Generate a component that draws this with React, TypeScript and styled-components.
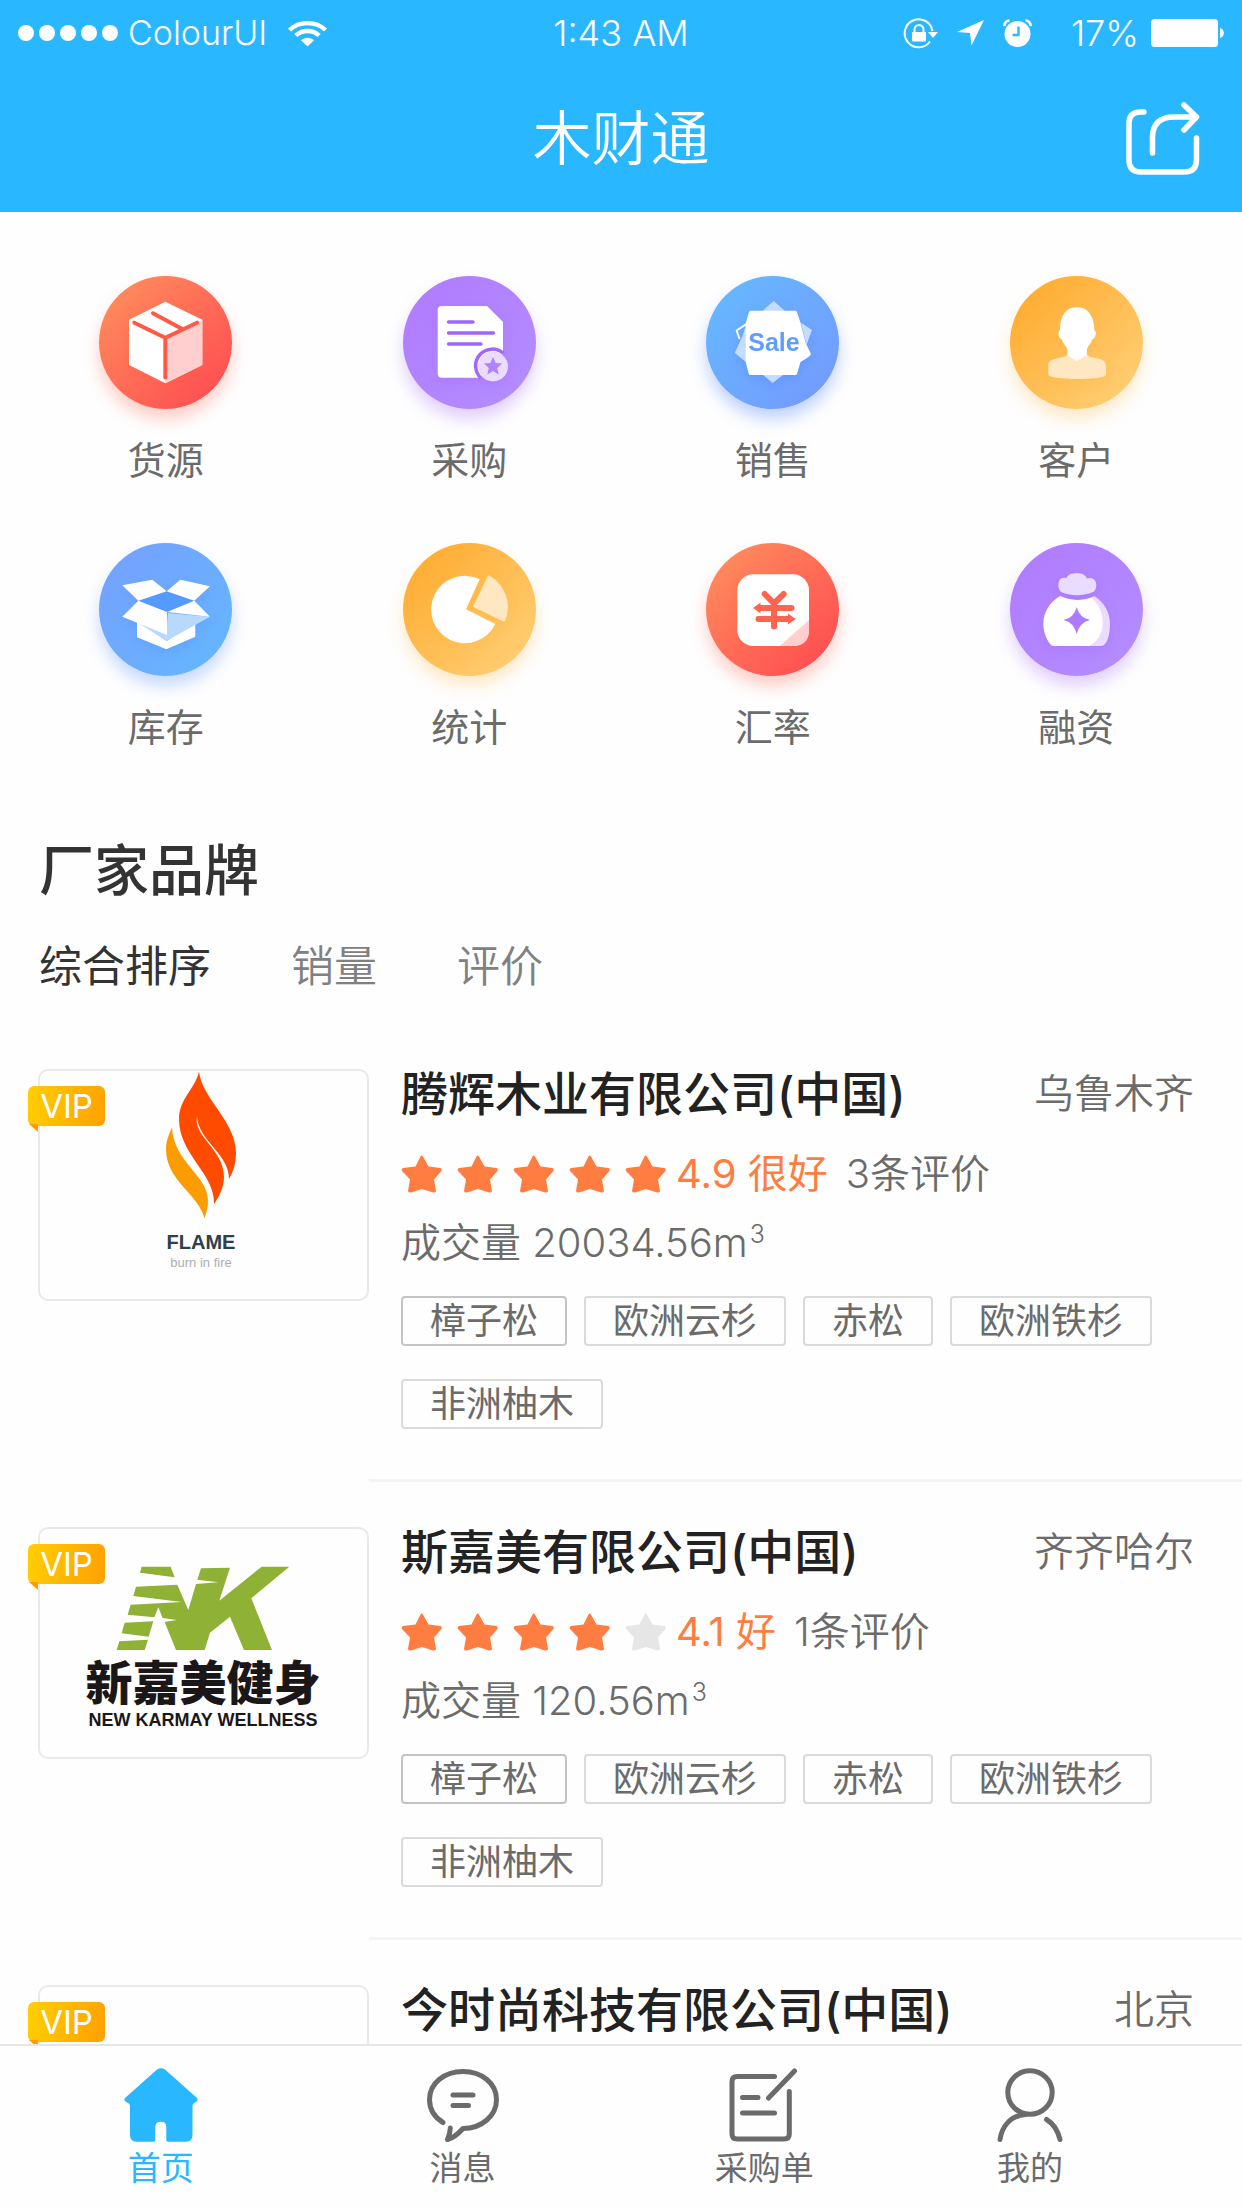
import React from "react";
import styled, { createGlobalStyle } from "styled-components";

const brand = "#29b8ff";
const grey = "#6b6b6b";
const orange = "#ff7d40";

const GlobalStyle = createGlobalStyle`
  *, *::before, *::after { box-sizing: border-box; }
  body {
    margin: 0;
    background: #fefefe;
    color: ${grey};
    font-family: Inter, "Noto Sans CJK SC", sans-serif;
    font-weight: 400;
  }
  button { border: 0; padding: 0; background: none; color: inherit; font: inherit; cursor: pointer; }
  a { color: inherit; text-decoration: none; }
  h1, h2, h3, p, ul { margin: 0; padding: 0; font-weight: inherit; }
  ul { list-style: none; }
  svg { display: block; flex: none; }
`;

const Screen = styled.div`
  display: flex;
  flex-direction: column;
  height: 100vh;
`;

/* ---------- header ---------- */

const Header = styled.header`
  flex: none;
  background: ${brand};
  color: #fff;
`;

const StatusBar = styled.div`
  display: grid;
  grid-template-columns: 1fr auto 1fr;
  align-items: center;
  height: 66px;
  padding: 0 18px;
  font-size: 36px;
  font-weight: 300;
  line-height: 40px;
`;

const StatusGroup = styled.div<{ $end?: boolean }>`
  display: flex;
  align-items: center;
  gap: ${(p) => (p.$end ? "19px" : "10px")};
  justify-content: ${(p) => (p.$end ? "flex-end" : "flex-start")};
`;

const Carrier = styled.span`
  margin-right: 11px;
  font-size: 34px;
`;

const Signal = styled.div`
  display: flex;
  gap: 5px;
`;

const SignalDot = styled.i`
  width: 16px;
  height: 16px;
  border-radius: 50%;
  background: #fff;
`;

const Power = styled.div`
  display: flex;
  align-items: center;
  gap: 12px;
  margin-left: 20px;
`;

const TitleBar = styled.div`
  display: grid;
  grid-template-columns: 1fr auto 1fr;
  align-items: center;
  height: 146px;
  padding: 0 42px;
`;

const Title = styled.h1`
  grid-column: 2;
  font-size: 59px;
  font-weight: 350;
  line-height: 72px;
`;

const ShareButton = styled.button`
  justify-self: end;
`;

/* ---------- shortcuts ---------- */

const Content = styled.main`
  flex: 1;
  min-height: 0;
  overflow-y: auto;
  scrollbar-width: none;
`;

const Shortcuts = styled.nav`
  display: grid;
  grid-template-columns: repeat(4, 1fr);
  row-gap: 59px;
  padding: 64px 14px 0;
`;

const Shortcut = styled.a`
  display: flex;
  flex-direction: column;
  align-items: center;
  gap: 27px;
  font-size: 38px;
  line-height: 48px;
`;

const Disc = styled.span<{ $from: string; $to: string; $glow: string }>`
  width: 133px;
  height: 133px;
  border-radius: 50%;
  background: linear-gradient(135deg, ${(p) => p.$from} 15%, ${(p) => p.$to} 85%);
  box-shadow: 0 10px 16px ${(p) => p.$glow};

  svg { filter: drop-shadow(0 4px 5px ${(p) => p.$glow}); }
`;

/* ---------- brand list ---------- */

const SectionTitle = styled.h2`
  padding: 87px 39px 0;
  color: #333;
  font-size: 55px;
  font-weight: 500;
  line-height: 64px;
`;

const SortBar = styled.div`
  display: flex;
  gap: 80px;
  padding: 36px 39px 30px;
`;

const SortButton = styled.button<{ $active?: boolean }>`
  color: ${(p) => (p.$active ? "#333" : "#808080")};
  font-size: 43px;
  font-weight: ${(p) => (p.$active ? 400 : 350)};
  line-height: 56px;
`;

const Company = styled.article`
  display: flex;
  align-items: stretch;
  padding-left: 38px;
`;

const LogoFrame = styled.div`
  position: relative;
  flex: none;
  width: 331px;
  height: 232px;
  margin-top: 45px;
  border: 2px solid #e9e9e9;
  border-radius: 10px;

  > svg { margin: -2px; }
`;

const VipBadge = styled.span`
  position: absolute;
  top: 15px;
  left: -12px;
  width: 77px;
  height: 40px;
  border-radius: 6px;
  background: linear-gradient(100deg, #ffcf00, #ffa000);
  color: #fff;
  font-size: 33px;
  font-weight: 400;
  line-height: 40px;
  text-align: center;

  &::after {
    content: "";
    position: absolute;
    top: 38px;
    left: 1px;
    border-top: 8px solid #ff9a00;
    border-left: 9px solid transparent;
  }
`;

const Details = styled.div<{ $ruled: boolean }>`
  flex: 1;
  min-width: 0;
  padding: 42px 48px 50px 32px;
  border-bottom: ${(p) => (p.$ruled ? "3px solid #f4f4f4" : "0")};
`;

const NameRow = styled.div`
  display: flex;
  align-items: center;
  justify-content: space-between;
`;

const CompanyName = styled.h3`
  color: #222;
  font-size: 47px;
  font-weight: 500;
  line-height: 56px;
`;

const City = styled.span`
  font-size: 40px;
  font-weight: 350;
  line-height: 56px;
`;

const RatingRow = styled.div`
  display: flex;
  align-items: center;
  margin-top: 27px;
  font-size: 40px;
  font-weight: 350;
  line-height: 50px;
`;

const Stars = styled.span`
  display: flex;
  gap: 15px;
  margin-right: 10px;
`;

const Score = styled.span`
  margin-right: 18px;
  color: ${orange};
  font-weight: 400;
`;

const Volume = styled.p`
  margin-top: 19px;
  font-size: 40px;
  font-weight: 350;
  line-height: 50px;
`;

const Cubed = styled.sup`
  margin-left: 2px;
  font-size: 25px;
  line-height: 0;
`;

const Tags = styled.ul`
  display: flex;
  flex-wrap: wrap;
  gap: 33px 17px;
  margin-top: 28px;
`;

const Tag = styled.li`
  height: 50px;
  padding: 0 27px;
  border: 2px solid #dadada;
  border-radius: 4px;
  font-size: 36px;
  line-height: 46px;

  &:first-child { border-color: #c4c4c4; }
`;

/* ---------- bottom tabs ---------- */

const TabBar = styled.nav`
  flex: none;
  display: grid;
  grid-template-columns: repeat(3, 302fr) 230fr;
  padding: 22px 97px 20px 10px;
  border-top: 2px solid #e6e6e6;
  background: #fefefe;
`;

const Tab = styled.a<{ $active?: boolean }>`
  display: flex;
  flex-direction: column;
  align-items: center;
  gap: 6px;
  color: ${(p) => (p.$active ? brand : grey)};
  font-size: 33px;
  line-height: 40px;
`;

/* ---------- status and header icons ---------- */

const WifiIcon = () => (
  <svg width="39" height="28" viewBox="0 0 39 28" fill="none" stroke="#fff" strokeWidth="4.4">
    <path d="M1.5 11C11 1.800 28 1.800 37.500 11" />
    <path d="M7.800 16.500C14 10.500 25 10.500 31.200 16.500" />
    <path d="M13 21.300C16.500 17.800 22.500 17.800 26 21.300L19.500 27.500Z" fill="#fff" stroke="none" />
  </svg>
);

const RotationLockIcon = () => (
  <svg width="35" height="31" viewBox="0 0 35 31" fill="none" stroke="#fff" strokeWidth="2">
    <path d="M29.500 13A14 14 0 1 0 27 23.500" />
    <path d="M25 14h10l-5 6Z" fill="#fff" stroke="none" />
    <rect x="9" y="14" width="14" height="9.500" rx="1" fill="#fff" stroke="none" />
    <path d="M11.500 14.500v-3a4.500 4.500 0 0 1 9 0v3" />
  </svg>
);

const LocationIcon = () => (
  <svg width="27" height="26" viewBox="0 0 27 26" fill="#fff">
    <path d="M27 0L14.500 25.500L13 13L0 12Z" />
  </svg>
);

const AlarmIcon = () => (
  <svg width="29" height="28" viewBox="0 0 29 28">
    <circle cx="14.500" cy="15" r="13" fill="#fff" />
    <path d="M1.500 7a5 5 0 0 1 5-5.500M27.500 7a5 5 0 0 0-5-5.500" fill="none" stroke="#fff" strokeWidth="2.600" />
    <path d="M15.500 7.500v8.500h-6" fill="none" stroke={brand} strokeWidth="2.400" />
  </svg>
);

const BatteryIcon = () => (
  <svg width="73" height="28" viewBox="0 0 73 28" fill="#fff">
    <rect width="67" height="28" rx="3.500" />
    <path d="M69 9c5 1 5 9 0 10Z" />
  </svg>
);

const ShareIcon = () => (
  <svg width="74" height="74" viewBox="0 0 74 74" fill="none" stroke="#fff" strokeWidth="5.500" strokeLinecap="round" strokeLinejoin="round">
    <path d="M18 10H15Q3 10 3 21V58Q3 70 15 70H58Q70.500 70 70.500 58V36" />
    <path d="M26.500 51V35Q27 15 48 15H70" />
    <path d="M58 3L70.500 15L58 28" />
  </svg>
);

/* ---------- shortcut icons, drawn on the 133px disc ---------- */

const discIcon = { width: 133, height: 133, viewBox: "0 0 133 133" };

const CargoIcon = () => (
  <svg {...discIcon}>
    <path d="M66.300 25.700L103.300 43.700V89L66.300 107.300L30 89V43.700Z" fill="#fff" />
    <path d="M66.300 61.700L103.300 43.700V89L66.300 107.300Z" fill="#ffcfcf" />
    <path d="M35.300 46.700L66.300 61.700L98 46.700M66.300 61.700V101.500M54 37.300L83.300 53" fill="none" stroke="#ff5b44" strokeWidth="4" strokeLinecap="round" />
  </svg>
);

const PurchaseIcon = () => (
  <svg {...discIcon}>
    <path d="M39 30H84L100 46V78L78 101.700H39Q34.700 101.700 34.700 97.500V34Q34.700 30 39 30Z" fill="#fff" />
    <path d="M45.500 46H70M45.500 57H90.500M45.500 68H78" stroke="#9f66ff" strokeWidth="3.300" strokeLinecap="round" />
    <path d="M100.500 77.500A16.500 16.500 0 0 0 78 102" fill="none" stroke="#a068ff" strokeWidth="3.500" />
    <circle cx="90" cy="90.500" r="15" fill="#e9dcff" />
    <path d="M90 81l2.600 6 6.600.6-5 4.400 1.500 6.500-5.700-3.400-5.700 3.400 1.500-6.500-5-4.400 6.600-.6Z" fill="#b083ff" />
  </svg>
);

const SaleIcon = () => (
  <svg {...discIcon}>
    <path d="M67.700 25L79 35H56.300ZM66.700 107L57 99H77ZM95 46.700L106 54L100.500 69ZM40 86L28.700 77L36 61L40 49Z" fill="#c3dcff" />
    <path d="M40.500 48L30.700 54.500L33.500 63" fill="none" stroke="#fff" strokeWidth="2" strokeLinejoin="round" />
    <path d="M45 34.700H89.500Q91 35 91.300 37L94.500 46.700L99.700 67L105 78Q105 80 94.500 86L91 98Q90.500 99 89 99H45Q43 99 42.800 98L39.700 86V47L43 36Q43.500 34.700 45 34.700Z" fill="#fff" />
    <text x="68" y="75" textAnchor="middle" fill="#5f9dff" fontFamily="'Liberation Sans', sans-serif" fontWeight="700" fontSize="25">Sale</text>
  </svg>
);

const CustomerIcon = () => (
  <svg {...discIcon}>
    <path d="M57.300 78.500C55 83 38.300 81 38.300 89V98.500C38.300 104.500 96 104.500 96 98.500V89C96 81 79.500 83 77.300 78.500Z" fill="#ffe7c2" />
    <path d="M66.700 31.300C77 31.300 84 38.500 84.300 54C87 55.500 86 62 82.500 63C81 68 77.500 70 77 73.500C76.500 77 77 79.500 77.300 79L66.700 85L57.300 79C57 79.500 58 77 57.300 73.500C56.500 70 53 68 51.500 63C48 62 47.500 55.500 50 54C50 38.500 57 31.300 66.700 31.300Z" fill="#fff" />
  </svg>
);

const StockIcon = () => (
  <svg {...discIcon}>
    <path d="M39.300 57.700L67.700 48.300L95.300 57.700L68 69Z" fill="#559aff" />
    <path d="M38 78V94.300L67.300 106.300L96.300 93.700V79L67.700 98Z" fill="#fff" />
    <path d="M69 70L111 73.700L67.700 97.700L40 80.500L67 90Z" fill="#b9d8ff" />
    <path d="M23.300 42.300L53.300 36.700L67.700 48.300L39.300 57.700ZM81.300 36.700L111 43.300L95.300 57.700L67.700 48.300ZM39.300 57.700L68 69V92L23.300 73.700ZM95.300 57.700L111 73.700L68 69Z" fill="#fff" />
  </svg>
);

const StatsIcon = () => (
  <svg {...discIcon}>
    <path d="M76.700 36.300A33.700 33.700 0 1 0 92.300 81L63 66.300Z" fill="#fff" />
    <path d="M70 63.700L84.600 33.500Q85.300 32 87 33A36 36 0 0 1 102.500 77Q101.700 79 100 78.300Z" fill="#ffe7c2" />
  </svg>
);

const RateIcon = () => (
  <svg {...discIcon}>
    <rect x="31.300" y="31.300" width="71.700" height="71.700" rx="16" fill="#fff" />
    <path d="M103 77L73.700 103H87Q103 103 103 87Z" fill="#ffcfcf" />
    <path d="M58.700 51L68 60.500L77.700 51M68 60.500V83.500M54 65H85.500M52.500 76H83" fill="none" stroke="#ff6450" strokeWidth="6" strokeLinecap="round" />
    <path d="M47 65L54.500 59.500V70.500ZM89.700 76L82 70.500V81.500Z" fill="#ff6450" />
  </svg>
);

const FinanceIcon = () => (
  <svg {...discIcon}>
    <path d="M50 53Q67 61 84.300 53C95 60 100 70 100 81C100 90 97.500 103 91 103H70Z" fill="#e9dcff" />
    <path d="M50 53Q65 60 82 55C89 61 92.700 71 92.700 80C92.700 92 86 99 79 103H43.500C39.500 103 33.300 91 33.300 81C33.300 69 40 59 50 53Z" fill="#fff" />
    <path d="M56.500 35C58.500 31 62 30.300 66.700 30.300C71.500 30.300 75 31.500 77 35.500C82 33.500 86.500 37 86.300 42C86.300 45 85.500 47 84 48.500C74 53.500 60 53.500 50.500 48.500C48.500 46 48 43 48.500 40C49 36 52 34.300 56.500 35Z" fill="#e9dcff" />
    <path d="M66.700 64Q69.500 75 80 77Q69.500 79.500 66.700 91Q64 79.500 53.500 77Q64 75 66.700 64Z" fill="#ac7bff" />
  </svg>
);

/* ---------- list drawings ---------- */

const StarIcon = ({ on }: { on: boolean }) => (
  <svg width="41" height="38" viewBox="0 0 41 38" fill={on ? orange : "#e6e6e6"}>
    <path d="M20.500 0.500Q21.500 0.500 22 1.500L27.500 11.500L39.500 13Q41.500 14 40.500 16L33 24.500L35 36Q34.500 38 32 37.500L21 34L10 37.500Q7.500 38 7 36L9 24.500L1 16Q0 14 2 13L14.500 11.500L19.500 1.500Q20 0.500 20.500 0.500Z" />
  </svg>
);

const FlameLogo = () => (
  <svg width="331" height="232" viewBox="0 0 331 232">
    <path d="M161 2.500C164 30 198 52 198 84C198 95 195 103 191 110C191 84 160 72 159 47C155 68 186 80 186 108C186 118 181 128 176 135C177 104 141 86 141 50C141 30 157 20 161 2.500Z" fill="#ff4b00" />
    <path d="M134 58.500C136 94 170 106 170 132C170 139 168 144 166.500 149.500C160 124 128 112 128 80C128 72 131 65 134 58.500Z" fill="#fb9c00" />
    <text x="163" y="180" textAnchor="middle" fill="#2f4048" fontFamily="'Liberation Sans', sans-serif" fontWeight="700" fontSize="20">FLAME</text>
    <text x="163" y="198" textAnchor="middle" fill="#a9aeb1" fontFamily="'Liberation Sans', sans-serif" fontSize="13">burn in fire</text>
  </svg>
);

const KarmayLogo = () => (
  <svg width="331" height="232" viewBox="0 0 331 232">
    <g transform="translate(-38 -27) scale(0.3333)" fill="#8fb135">
      <path d="M425 200H512L524 232L420 218Z" />
      <path d="M532 254L565 330L588 252L655 247L592 239L603 205L690 203L658 302L785 200H868L754 295L816 450H732L690 350L630 398L614 450H528L494 366L530 360L488 354L475 322L463 352L383 344L392 314L545 306L400 288L408 260Z" />
      <path d="M374 368L460 364L446 410L365 400ZM358 424L444 419L434 450H350Z" />
    </g>
    <text x="165" y="173" textAnchor="middle" fill="#1b1718" fontFamily="'Liberation Sans', 'Noto Sans CJK SC', sans-serif" fontWeight="900" fontSize="47">新嘉美健身</text>
    <text x="165" y="199" textAnchor="middle" fill="#1b1718" fontFamily="'Liberation Sans', sans-serif" fontWeight="700" fontSize="18">NEW KARMAY WELLNESS</text>
  </svg>
);

/* ---------- tab icons ---------- */

const tabIcon = {
  width: 74,
  height: 74,
  viewBox: "0 0 74 74",
  fill: "none",
  stroke: "currentColor",
  strokeWidth: 5,
  strokeLinecap: "round" as const,
  strokeLinejoin: "round" as const,
};

const HomeIcon = () => (
  <svg {...tabIcon} fill="currentColor" stroke="none">
    <path d="M33 1.500Q37 -1 41 1.500L73 30Q74.500 32 72 34Q68.500 35.500 68.500 38V67Q68.500 73.700 62 73.700H44Q42.300 73.700 42.300 72V59Q42.300 53.700 37 53.700Q31.300 53.700 31.300 59V72Q31.300 73.700 29.500 73.700H12.500Q6 73.700 6 67V38Q6 35.500 2 34Q-0.500 32 1 30Z" />
  </svg>
);

const MessageIcon = () => (
  <svg {...tabIcon}>
    <path d="M17 54.500C8 49 3.500 41 3.500 31.500C3.500 15.500 18 3.500 37 3.500S70.500 15.500 70.500 31.500S56 60.500 37 60.500C33 65 27 70 21.500 71.500Q24 66 24.300 60" />
    <path d="M27 27H47M27 37.500H42.500" />
  </svg>
);

const OrderIcon = () => (
  <svg {...tabIcon}>
    <path d="M47.500 8.500H10Q5 8.500 5 13.500V66Q5 71 10 71H57Q62.300 71 62.300 66V23.500" />
    <path d="M67.500 3L41.500 30M15.500 29.500H31M15.500 45H47.500" />
  </svg>
);

const ProfileIcon = () => (
  <svg {...tabIcon}>
    <ellipse cx="37" cy="24.500" rx="22.200" ry="21.700" />
    <path d="M7 71.500C9 58 18 47 33 46.500M53.500 51.500C61 56 65 63 67 71.500" />
  </svg>
);

/* ---------- data ---------- */

const red = { $from: "#ff875c", $to: "#ff5252", $glow: "rgba(255, 92, 70, 0.3)" };
const purple = { $from: "#b07dff", $to: "#b48bff", $glow: "rgba(160, 100, 255, 0.3)" };
const blue = { $from: "#67b5ff", $to: "#739dff", $glow: "rgba(80, 130, 255, 0.36)" };
const blueReverse = { $from: "#74a3ff", $to: "#66b4ff", $glow: "rgba(80, 140, 255, 0.32)" };
const amber = { $from: "#ffae35", $to: "#ffcc70", $glow: "rgba(255, 180, 60, 0.28)" };

const shortcuts = [
  { label: "货源", tone: red, Icon: CargoIcon },
  { label: "采购", tone: purple, Icon: PurchaseIcon },
  { label: "销售", tone: blue, Icon: SaleIcon },
  { label: "客户", tone: amber, Icon: CustomerIcon },
  { label: "库存", tone: blueReverse, Icon: StockIcon },
  { label: "统计", tone: amber, Icon: StatsIcon },
  { label: "汇率", tone: red, Icon: RateIcon },
  { label: "融资", tone: purple, Icon: FinanceIcon },
];

const woods = ["樟子松", "欧洲云杉", "赤松", "欧洲铁杉", "非洲柚木"];

type CompanyInfo = {
  name: string;
  city: string;
  Logo?: React.FC;
  review?: { stars: number; score: string; count: string; volume: string };
};

const companies: CompanyInfo[] = [
  {
    name: "腾辉木业有限公司(中国)",
    city: "乌鲁木齐",
    Logo: FlameLogo,
    review: { stars: 5, score: "4.9 很好", count: "3条评价", volume: "20034.56" },
  },
  {
    name: "斯嘉美有限公司(中国)",
    city: "齐齐哈尔",
    Logo: KarmayLogo,
    review: { stars: 4, score: "4.1 好", count: "1条评价", volume: "120.56" },
  },
  { name: "今时尚科技有限公司(中国)", city: "北京" },
];

const tabs = [
  { label: "首页", Icon: HomeIcon },
  { label: "消息", Icon: MessageIcon },
  { label: "采购单", Icon: OrderIcon },
  { label: "我的", Icon: ProfileIcon },
];

function CompanyCard({ name, city, Logo, review }: CompanyInfo) {
  return (
    <Company>
      <LogoFrame>
        {Logo && <Logo />}
        <VipBadge>VIP</VipBadge>
      </LogoFrame>
      <Details $ruled={Boolean(review)}>
        <NameRow>
          <CompanyName>{name}</CompanyName>
          <City>{city}</City>
        </NameRow>
        {review && (
          <>
            <RatingRow>
              <Stars>
                {[1, 2, 3, 4, 5].map((n) => (
                  <StarIcon key={n} on={n <= review.stars} />
                ))}
              </Stars>
              <Score>{review.score}</Score>
              <span>{review.count}</span>
            </RatingRow>
            <Volume>
              成交量 {review.volume}m<Cubed>3</Cubed>
            </Volume>
            <Tags>
              {woods.map((wood) => (
                <Tag key={wood}>{wood}</Tag>
              ))}
            </Tags>
          </>
        )}
      </Details>
    </Company>
  );
}

export default function App() {
  return (
    <Screen lang="zh-CN">
      <GlobalStyle />
      <Header>
        <StatusBar>
          <StatusGroup>
            <Signal>
              {[1, 2, 3, 4, 5].map((n) => (
                <SignalDot key={n} />
              ))}
            </Signal>
            <Carrier>ColourUI</Carrier>
            <WifiIcon />
          </StatusGroup>
          <span>1:43 AM</span>
          <StatusGroup $end>
            <RotationLockIcon />
            <LocationIcon />
            <AlarmIcon />
            <Power>
              <span>17%</span>
              <BatteryIcon />
            </Power>
          </StatusGroup>
        </StatusBar>
        <TitleBar>
          <Title>木财通</Title>
          <ShareButton type="button" aria-label="分享">
            <ShareIcon />
          </ShareButton>
        </TitleBar>
      </Header>

      <Content>
        <Shortcuts>
          {shortcuts.map(({ label, tone, Icon }) => (
            <Shortcut href="#" key={label}>
              <Disc {...tone}>
                <Icon />
              </Disc>
              {label}
            </Shortcut>
          ))}
        </Shortcuts>

        <SectionTitle>厂家品牌</SectionTitle>
        <SortBar>
          <SortButton type="button" $active>综合排序</SortButton>
          <SortButton type="button">销量</SortButton>
          <SortButton type="button">评价</SortButton>
        </SortBar>

        {companies.map((company) => (
          <CompanyCard key={company.name} {...company} />
        ))}
      </Content>

      <TabBar>
        {tabs.map(({ label, Icon }, index) => (
          <Tab href="#" key={label} $active={index === 0}>
            <Icon />
            {label}
          </Tab>
        ))}
      </TabBar>
    </Screen>
  );
}
